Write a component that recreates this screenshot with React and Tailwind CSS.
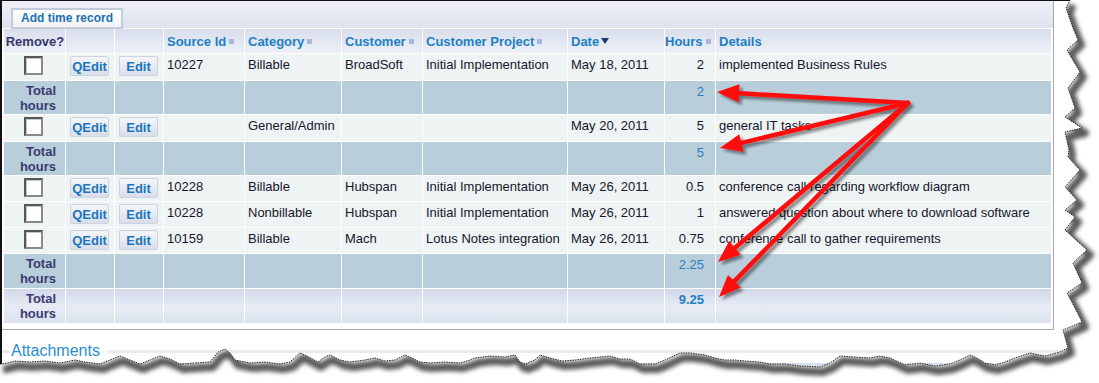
import React from 'react'

const rows = [
  { type: 'item', h: 'h-[27px]', id: '10227', cat: 'Billable', cust: 'BroadSoft', proj: 'Initial Implementation', date: 'May 18, 2011', hours: '2', det: 'implemented Business Rules' },
  { type: 'total', h: 'h-[34px]', hours: '2' },
  { type: 'item', h: 'h-[27px]', id: '', cat: 'General/Admin', cust: '', proj: '', date: 'May 20, 2011', hours: '5', det: 'general IT tasks' },
  { type: 'total', h: 'h-[34px]', hours: '5' },
  { type: 'item', h: 'h-[26px]', id: '10228', cat: 'Billable', cust: 'Hubspan', proj: 'Initial Implementation', date: 'May 26, 2011', hours: '0.5', det: 'conference call regarding workflow diagram' },
  { type: 'item', h: 'h-[26px]', id: '10228', cat: 'Nonbillable', cust: 'Hubspan', proj: 'Initial Implementation', date: 'May 26, 2011', hours: '1', det: 'answered question about where to download software' },
  { type: 'item', h: 'h-[26px]', id: '10159', cat: 'Billable', cust: 'Mach', proj: 'Lotus Notes integration', date: 'May 26, 2011', hours: '0.75', det: 'conference call to gather requirements' },
  { type: 'total', h: 'h-[35px]', hours: '2.25' },
  { type: 'grand', h: 'h-[35px]', hours: '9.25' },
]

const widths = [62, 49, 49, 81, 97, 81, 145, 97, 51, 336]

// torn paper edge, right side top to bottom, then bottom right to left
const rightEdge = [
  [1070, 0], [1066, 8], [1073, 28], [1078, 40], [1067, 50], [1074, 62], [1080, 72], [1068, 88],
  [1075, 108], [1065, 117], [1082, 128], [1065, 132], [1069, 150], [1068, 157], [1080, 170],
  [1065, 187], [1077, 200], [1065, 210], [1075, 217], [1065, 230], [1087, 250], [1073, 263],
  [1082, 283], [1067, 293], [1075, 308], [1082, 322], [1063, 330], [1068, 348], [1060, 352],
]
const bottomEdge = [
  [1045, 356], [1030, 353], [1015, 358], [1005, 362], [995, 365], [985, 363], [975, 357], [970, 355],
  [960, 360], [950, 364], [935, 366], [920, 363], [905, 365], [890, 358], [880, 356], [870, 358],
  [855, 357], [840, 356], [830, 363], [820, 367], [800, 366], [785, 364], [770, 364], [760, 362],
  [745, 361], [735, 360], [725, 360], [715, 358], [705, 355], [690, 353], [680, 353], [665, 360],
  [655, 364], [640, 364], [630, 359], [620, 359], [610, 356], [600, 357], [590, 358], [575, 360],
  [562, 361], [550, 358], [540, 355], [535, 360], [525, 364], [520, 362], [515, 355], [505, 357],
  [490, 356], [475, 358], [470, 360], [460, 363], [445, 362], [430, 363], [420, 362], [410, 357],
  [405, 355], [395, 360], [385, 361], [375, 358], [365, 360], [350, 362], [340, 360], [330, 355],
  [325, 357], [318, 362], [305, 355], [300, 353], [290, 362], [280, 364], [265, 362], [250, 363],
  [235, 360], [230, 353], [225, 349], [218, 352], [210, 362], [195, 363], [180, 364], [170, 359],
  [160, 356], [150, 360], [140, 364], [130, 360], [120, 356], [110, 360], [100, 364], [85, 362],
  [75, 360], [60, 363], [45, 361], [30, 362], [15, 361], [3, 364], [0, 364],
]
const edge = [...rightEdge, ...bottomEdge]
const edgeLine = 'M' + edge.map((p) => p.join(' ')).join(' L')
const paperPath = 'M0 0 ' + edge.map((p) => 'L' + p.join(' ')).join(' ') + ' Z'
const outsidePath = 'M0 0 H1099 V383 H0 Z ' + paperPath

const origin = [908, 103]
const tips = [[717, 92], [720, 148], [718, 262], [719, 297]]

function arrow(t) {
  const dx = t[0] - origin[0]
  const dy = t[1] - origin[1]
  const len = Math.hypot(dx, dy)
  const ux = dx / len
  const uy = dy / len
  const bx = t[0] - ux * 22
  const by = t[1] - uy * 22
  const nx = -uy * 9
  const ny = ux * 9
  return {
    line: [origin[0], origin[1], bx + ux * 3, by + uy * 3],
    head: `${t[0]},${t[1]} ${bx + nx},${by + ny} ${bx - nx},${by - ny}`,
  }
}

function SortMark() {
  return <span className="inline-block w-[5px] h-[5px] bg-[#a7b4dc] ml-[3px] mb-[2px] align-middle" />
}

function Header() {
  const cols = [
    { label: 'Remove?', cls: 'text-[#36366a] pl-[1px]' },
    { label: '' },
    { label: '' },
    { label: 'Source Id', sort: true },
    { label: 'Category', sort: true },
    { label: 'Customer', sort: true },
    { label: 'Customer Project', sort: true },
    { label: 'Date', down: true },
    { label: 'Hours', sort: true, cls: 'text-right pr-[5px] text-[#1e80c4]' },
    { label: 'Details' },
  ]
  return (
    <tr className="h-[25px] bg-linear-to-b from-[#d8deec] to-[#eef1f7]">
      {cols.map((c, i) => (
        <th
          key={i}
          className={`border border-white align-middle font-bold text-[13px] leading-[15px] whitespace-nowrap ${c.cls || 'text-left pl-[3px] text-[#1e80c4]'}`}
        >
          {c.label}
          {c.sort && <SortMark />}
          {c.down && (
            <svg width="8" height="6" viewBox="0 0 8 6" className="inline-block ml-[2px] mb-[3px] align-middle">
              <path d="M0 0 H8 L4 6 Z" fill="#1b3d6e" />
            </svg>
          )}
        </th>
      ))}
    </tr>
  )
}

function SmallButton({ children }) {
  return (
    <span className="flex items-center justify-center w-[39px] h-[20px] rounded-[2px] border border-[#cdd2dd] bg-linear-to-b from-[#f5f6fa] to-[#d9deea] text-[13px] leading-none font-bold text-[#1a76bc]">
      {children}
    </span>
  )
}

function ItemRow({ r }) {
  const td = 'border border-white align-top pt-[3px] pl-[3px] text-[13px] leading-[15px] text-[#16162c] whitespace-nowrap'
  return (
    <tr className={`${r.h} bg-[#eef3f3]`}>
      <td className="border border-white align-top pt-[2px] leading-none">
        <span className="block ml-[20px] w-[19px] h-[19px] border-2 border-[#575757] border-r-[#8a8a8a] border-b-[#8a8a8a] bg-white shadow-[inset_1px_1px_0_#c8c8c8]" />
      </td>
      <td className="border border-white align-top pt-[2px] pl-[4px] leading-none">
        <SmallButton>QEdit</SmallButton>
      </td>
      <td className="border border-white align-top pt-[2px] pl-[4px] leading-none">
        <SmallButton>Edit</SmallButton>
      </td>
      <td className={td}>{r.id}</td>
      <td className={td}>{r.cat}</td>
      <td className={td}>{r.cust}</td>
      <td className={td}>{r.proj}</td>
      <td className={td}>{r.date}</td>
      <td className={`${td} text-right pr-[11px]`}>{r.hours}</td>
      <td className={td}>{r.det}</td>
    </tr>
  )
}

function TotalRow({ r }) {
  const grand = r.type === 'grand'
  return (
    <tr className={`${r.h} ${grand ? 'bg-linear-to-b from-[#d1d8e9] via-[#e6ebf4] to-[#dbe1ed]' : 'bg-[#b8cfdb]'}`}>
      <td className="border border-white align-top pt-[2px] pr-[9px] text-right text-[13px] leading-[15px] font-bold text-[#3a3a70]">
        Total
        <br />
        hours
      </td>
      {Array.from({ length: 7 }).map((_, i) => (
        <td key={i} className="border border-white" />
      ))}
      <td className={`border border-white align-top pt-[3px] pr-[11px] text-right text-[13px] leading-[15px] ${grand ? 'font-bold text-[#1a7fc6]' : 'text-[#2c7dbf]'}`}>
        {r.hours}
      </td>
      <td className="border border-white" />
    </tr>
  )
}

export default function App() {
  return (
    <div className="relative w-[1099px] h-[383px] bg-white overflow-hidden font-['Liberation_Sans',Arial,sans-serif]">
      {/* paper */}
      <div className="h-full border-l-2 border-t border-[#111]">
        <div className="w-[1052px] h-[329px] border-r border-b border-[#a8a8a8] bg-white">
          <div className="h-[27px] pt-[4px] pl-[9px] bg-linear-to-b from-[#eef0f7] to-[#dde3ee]">
            <button className="h-[21px] px-[8px] border-2 border-[#c3cada] bg-linear-to-b from-white to-[#f1f3f8] text-[12px] font-bold text-[#1d70b2] leading-none">
              Add time record
            </button>
          </div>
          <table className="ml-[1px] w-[1048px] table-fixed border-collapse">
            <colgroup>
              {widths.map((w, i) => (
                <col key={i} style={{ width: w }} />
              ))}
            </colgroup>
            <tbody>
              <Header />
              {rows.map((r, i) =>
                r.type === 'item' ? <ItemRow key={i} r={r} /> : <TotalRow key={i} r={r} />
              )}
            </tbody>
          </table>
        </div>

        {/* attachments section */}
        <div className="mt-[12px] flex items-center h-[18px]">
          <div className="w-[7px] h-[3px] bg-[#ebebeb]" />
          <span className="ml-[2px] text-[16px] leading-[18px] text-[#2a8dd1]">Attachments</span>
          <div className="ml-[8px] flex-1 h-[3px] bg-[#ebebeb]" />
        </div>
        <div className="mt-[3px] h-[12px] bg-[#d7deed]" />
      </div>

      {/* torn edge and annotation arrows */}
      <svg className="absolute inset-0 pointer-events-none" width="1099" height="383" viewBox="0 0 1099 383">
        <defs>
          <clipPath id="outside">
            <path d={outsidePath} clipRule="evenodd" />
          </clipPath>
          <filter id="blur" x="-10%" y="-10%" width="120%" height="120%">
            <feGaussianBlur stdDeviation="2.2" />
          </filter>
          <filter id="arrowShadow" x="-10%" y="-10%" width="120%" height="120%">
            <feDropShadow dx="3" dy="3" stdDeviation="1.6" floodColor="#000" floodOpacity="0.45" />
          </filter>
        </defs>
        <path d={outsidePath} fill="#fff" fillRule="evenodd" />
        <g clipPath="url(#outside)">
          <path d={edgeLine} transform="translate(3 5)" fill="none" stroke="#5a5a5a" strokeWidth="8" strokeLinejoin="round" filter="url(#blur)" />
        </g>
        <path d={edgeLine} fill="none" stroke="#111" strokeWidth="0.9" strokeDasharray="1.5 1" />

        <g filter="url(#arrowShadow)">
          {tips.map((t, i) => {
            const a = arrow(t)
            return (
              <g key={i}>
                <line x1={a.line[0]} y1={a.line[1]} x2={a.line[2]} y2={a.line[3]} stroke="#ff0a0a" strokeWidth="4.5" strokeLinecap="round" />
                <polygon points={a.head} fill="#ff0a0a" />
              </g>
            )
          })}
        </g>
      </svg>
    </div>
  )
}
